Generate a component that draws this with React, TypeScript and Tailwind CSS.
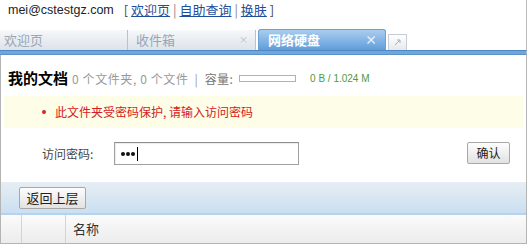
import React from "react";

const cjk = { fontFamily: '"Noto Sans CJK SC", "DejaVu Sans", sans-serif' };
const latin = { fontFamily: '"Liberation Sans", Arial, "Noto Sans CJK SC", sans-serif' };

export default function App() {
  return (
    <div className="w-[527px] h-[245px] bg-white overflow-hidden text-[#333]" style={cjk}>
      {/* top bar */}
      <div className="h-[29px] flex items-start pt-[1px] pl-[8px] text-[13px] leading-[18px] border-r border-[#bbb]">
        <span style={latin} className="text-[12.5px] text-[#222]">mei@cstestgz.com</span>
        <span className="ml-[10px] text-[13px] text-[#444]">
          [ <a className="text-[#1f4f9c] underline">欢迎页</a> <span className="text-[#888]">|</span>{" "}
          <a className="text-[#1f4f9c] underline">自助查询</a> <span className="text-[#888]">|</span>{" "}
          <a className="text-[#1f4f9c] underline">换肤</a> ]
        </span>
      </div>
      {/* tabs */}
      <div className="h-[21px] flex items-end border-r border-[#bbb]">
        <div className="w-[128px] h-[20px] flex items-center pl-[4px] bg-gradient-to-b from-[#f6f8fa] to-[#dde3ea] border-r border-[#b8c2cc] text-[13px] text-[#98a6b4]">
          欢迎页
        </div>
        <div className="w-[128px] h-[20px] flex items-center pl-[8px] pr-[7px] bg-gradient-to-b from-[#f6f8fa] to-[#dde3ea] border-r border-[#b8c2cc] text-[13px] text-[#98a6b4]">
          <span className="flex-1">收件箱</span>
          <span className="text-[9px] text-[#bbb]">×</span>
        </div>
        <div className="ml-[2px] w-[128px] h-[21px] flex items-center pl-[9px] pr-[8px] rounded-t-[3px] bg-gradient-to-b from-[#a9cdee] to-[#5f9ddb] border border-b-0 border-[#6c9fd2] text-[13px] font-bold text-white">
          <span className="flex-1">网络硬盘</span>
          <span className="text-[12px] text-[#e8f0f8] font-bold">×</span>
        </div>
        <div className="ml-[2px] w-[19px] h-[16px] flex items-center justify-center bg-gradient-to-b from-[#ffffff] to-[#e6e9ec] border border-b-0 border-[#c4ccd4]">
          <svg width="9" height="9" viewBox="0 0 9 9">
            <path d="M2 7 L7 2 M4 2 H7 V5" stroke="#aab" strokeWidth="1" fill="none" />
          </svg>
        </div>
      </div>
      <div className="h-[5px] bg-[#6ea6dd] border-t border-[#4f87c2] border-b border-b-[#5a92cc] border-r border-r-[#bbb]" />
      {/* content */}
      <div className="h-[189px] border-l border-r border-b border-[#b4b4b4] flex flex-col">
        <div className="h-[41px] flex items-center pl-[7px] pt-[6px]">
          <span className="text-[15px] font-bold text-black">我的文档</span>
          <span className="ml-[4px] text-[12px] tracking-[0.6px] text-[#999]">0 个文件夹, 0 个文件</span>
          <span className="ml-[6px] text-[12px] text-[#999]">|</span>
          <span className="ml-[7px] text-[12px] tracking-[0.3px] text-[#777]">容量:</span>
          <div className="ml-[6px] w-[57px] h-[7px] border border-[#a9b3bd] bg-white" />
          <span style={latin} className="ml-[14px] text-[10px] text-[#4e9a3e]">0 B / 1.024 M</span>
        </div>
        <div className="mx-[3px] h-[32px] bg-[#fdfde8] flex items-center pl-[38px]">
          <span className="w-[4px] h-[4px] rounded-full bg-[#d8232a]" />
          <span className="ml-[9px] text-[12px] text-[#d52020]">此文件夹受密码保护, 请输入访问密码</span>
        </div>
        <div className="h-[54px] flex items-start pt-[14px] pl-[41px] pr-[16px]">
          <span className="text-[12px] text-[#444] w-[72px] leading-[23px]">访问密码:</span>
          <div className="w-[185px] h-[23px] border border-[#a0a0a0] border-t-[#8c8c8c] bg-white flex items-center pl-[6px] shadow-[inset_1px_1px_1px_rgba(0,0,0,0.08)]">
            <span className="w-[4px] h-[4px] rounded-full bg-[#111]" />
            <span className="ml-[1px] w-[4px] h-[4px] rounded-full bg-[#111]" />
            <span className="ml-[1px] w-[4px] h-[4px] rounded-full bg-[#111]" />
            <span className="ml-[2px] w-[1px] h-[14px] bg-black" />
          </div>
          <div className="flex-1" />
          <div className="w-[43px] h-[22px] flex items-center justify-center rounded-[2px] border border-[#a8a8a8] bg-gradient-to-b from-[#fdfdfd] to-[#e2e2e2] text-[12px] text-[#222]">
            确认
          </div>
        </div>
        <div className="h-[33px] bg-gradient-to-b from-[#e7eef4] to-[#cadff1] border-b-2 border-[#b6d3ee] flex items-center pl-[18px]">
          <div className="w-[67px] h-[22px] flex items-center justify-center rounded-[2px] border border-[#a8a8a8] bg-gradient-to-b from-[#fdfdfd] to-[#e2e2e2] text-[13px] text-[#222]">
            返回上层
          </div>
        </div>
        <div className="flex-1 flex bg-gradient-to-b from-[#fbfbfb] to-[#ececec] text-[13px] text-[#333]">
          <div className="w-[21px] border-r border-[#d4d4d4]" />
          <div className="w-[44px] border-r border-[#d4d4d4]" />
          <div className="flex items-center pl-[7px]">名称</div>
        </div>
      </div>
    </div>
  );
}
